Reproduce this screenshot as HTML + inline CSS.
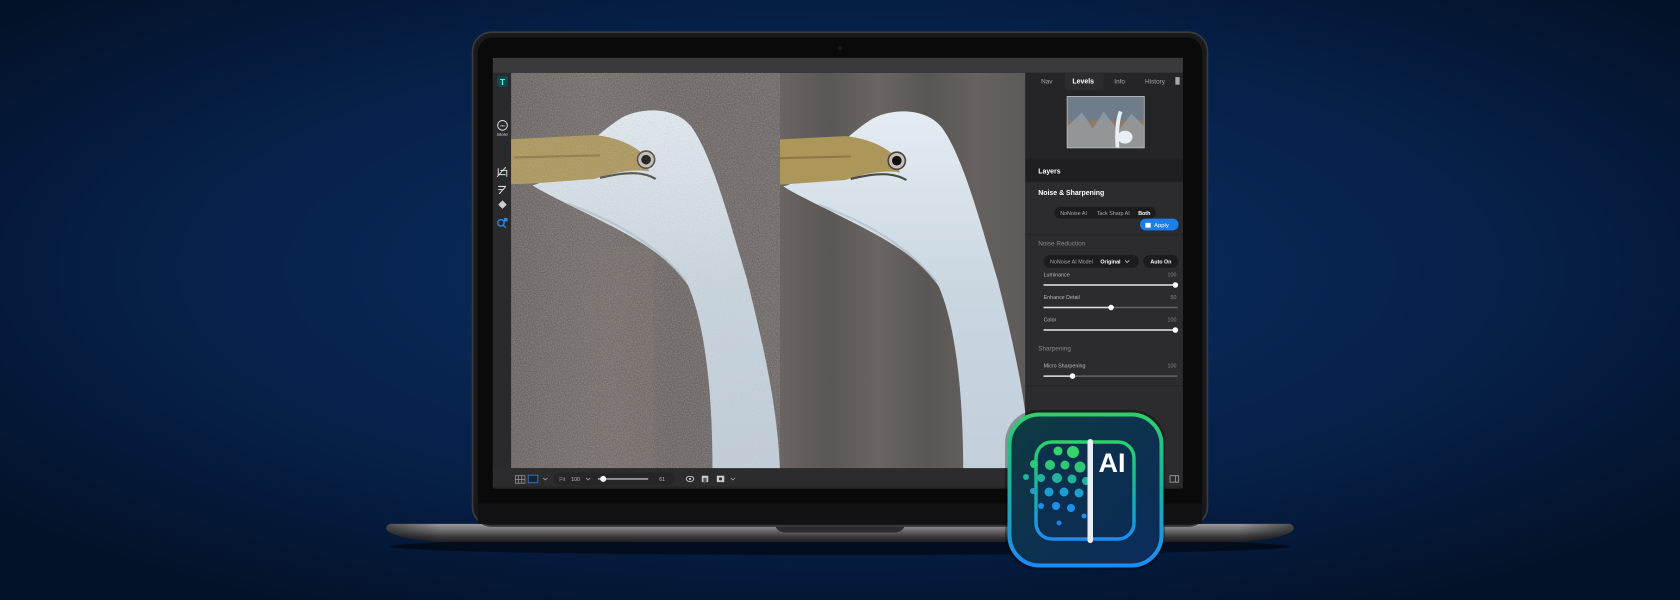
<!DOCTYPE html>
<html><head><meta charset="utf-8"><style>
html,body{margin:0;padding:0;width:1680px;height:600px;overflow:hidden;background:#04142d}
svg{display:block}
text{font-family:"Liberation Sans",sans-serif}
</style></head><body>
<svg width="1680" height="600" viewBox="0 0 1568 560" xmlns="http://www.w3.org/2000/svg">
<defs>
<radialGradient id="bg" cx="0.5" cy="0.45" r="0.65">
<stop offset="0" stop-color="#0b2f60"/><stop offset="0.6" stop-color="#06214a"/><stop offset="1" stop-color="#031228"/>
</radialGradient>
<linearGradient id="base" x1="0" y1="0" x2="0" y2="1">
<stop offset="0" stop-color="#9a9a9c"/><stop offset="0.35" stop-color="#6e6e70"/><stop offset="0.7" stop-color="#3a3a3c"/><stop offset="1" stop-color="#1c1c1e"/>
</linearGradient>
<linearGradient id="baseH" x1="0" y1="0" x2="1" y2="0">
<stop offset="0" stop-color="#000" stop-opacity="0.5"/><stop offset="0.06" stop-color="#000" stop-opacity="0"/><stop offset="0.94" stop-color="#000" stop-opacity="0"/><stop offset="1" stop-color="#000" stop-opacity="0.5"/>
</linearGradient>
<linearGradient id="leftbg" x1="0" y1="0" x2="1" y2="0">
<stop offset="0" stop-color="#6a6461"/><stop offset="0.3" stop-color="#736c69"/><stop offset="0.6" stop-color="#6b6562"/><stop offset="1" stop-color="#6e6865"/>
</linearGradient>
<linearGradient id="rightbg" x1="0" y1="0" x2="1" y2="0">
<stop offset="0" stop-color="#6a6462"/><stop offset="0.2" stop-color="#5b5755"/><stop offset="0.4" stop-color="#6a6562"/><stop offset="0.6" stop-color="#5a5654"/><stop offset="0.8" stop-color="#66615f"/><stop offset="1" stop-color="#5e5a58"/>
</linearGradient>
<linearGradient id="bird" x1="0" y1="0" x2="0" y2="1">
<stop offset="0" stop-color="#e4ecf2"/><stop offset="0.5" stop-color="#c9d6e0"/><stop offset="1" stop-color="#c2cfdb"/>
</linearGradient>
<filter id="noise" x="0" y="0" width="1" height="1">
<feTurbulence type="fractalNoise" baseFrequency="0.9" numOctaves="2" seed="3"/>
<feColorMatrix type="matrix" values="0 0 0 0 0.5  0 0 0 0 0.5  0 0 0 0 0.5  0 0 0 1.2 -0.35"/>
</filter>
<clipPath id="cl"><rect x="477" y="68" width="251" height="369"/></clipPath>
<clipPath id="cr"><rect x="728" y="68" width="229" height="369"/></clipPath>
<clipPath id="ct"><rect x="996" y="90" width="72" height="48"/></clipPath>
<linearGradient id="ring" x1="0" y1="0" x2="0" y2="1">
<stop offset="0" stop-color="#2bd06a"/><stop offset="0.5" stop-color="#1bb0a0"/><stop offset="1" stop-color="#1c8cf5"/>
</linearGradient>
<linearGradient id="ifill" x1="0" y1="0" x2="1" y2="1">
<stop offset="0" stop-color="#0f3a40"/><stop offset="1" stop-color="#0b2a5c"/>
</linearGradient>
<g id="egret">
<path d="M497,173 C520,168 548,130 580,110 C598,100 630,99 645,118 C665,145 682,210 697,260 C712,320 726,380 728,440 L665,440 C665,360 657,300 642,266 C622,236 585,218 545,198 C525,188 508,180 497,173 Z" fill="url(#bird)"/>
<path d="M530,190 C570,205 610,225 640,262" stroke="#aab8c4" stroke-width="2" fill="none" opacity="0.6"/>
<path d="M477,130 L555,126 C575,128 590,135 598,142 L606,160 C590,157 570,162 555,167 L500,171 L477,172 Z" fill="#ad9659"/>
<path d="M480,147 L560,145" stroke="#7a6538" stroke-width="2" opacity="0.6"/>
<path d="M560,166 C585,160 600,160 612,167" stroke="#4a4845" stroke-width="2" fill="none"/>
<circle cx="603" cy="149" r="8" fill="#c9c2b8" stroke="#4a4440" stroke-width="1.5"/>
<circle cx="603" cy="149" r="4.5" fill="#111"/>
</g>
</defs>
<rect width="1568" height="560" fill="url(#bg)"/>

<ellipse cx="784" cy="510" rx="420" ry="8" fill="#000" opacity="0.5"/>
<path d="M364,489 L1204,489 Q1210,492 1206,496 Q1190,505 1150,506 L418,506 Q378,505 362,496 Q358,492 364,489 Z" fill="url(#base)"/>
<path d="M364,489 L1204,489 Q1210,492 1206,496 Q1190,505 1150,506 L418,506 Q378,505 362,496 Q358,492 364,489 Z" fill="url(#baseH)"/>
<path d="M723,489 L845,489 Q843,497 835,497 L733,497 Q725,497 723,489 Z" fill="#2c2c2e"/>

<rect x="441" y="30" width="686" height="461" rx="18" fill="#1a1a1c" stroke="#3c3c3f" stroke-width="1.5"/>
<rect x="446" y="35" width="676" height="454" rx="14" fill="#0a0a0b"/>
<circle cx="784" cy="45" r="2" fill="#1e1e22"/>
<rect x="446" y="470" width="676" height="19" fill="#121214"/>

<rect x="460" y="54" width="644" height="402" rx="3" fill="#2a2a2c"/>
<rect x="460" y="54" width="644" height="14" fill="#3a3a3c"/>
<rect x="460" y="68" width="17" height="369" fill="#2a2a2c"/>
<rect x="464" y="71" width="10" height="10" rx="2" fill="#0f4a4e"/>
<text x="469" y="79.5" font-size="8" fill="#6ee" text-anchor="middle" font-weight="bold">T</text>
<circle cx="469" cy="117" r="4.5" fill="none" stroke="#ddd" stroke-width="0.9"/>
<text x="469" y="119" font-size="4" fill="#ddd" text-anchor="middle">•••</text>
<text x="469" y="127" font-size="4.5" fill="#ccc" text-anchor="middle">More</text>
<path d="M465,157 L465,163 L472,163 M467,159 L473,159 L473,165 M464,165 L472,156" stroke="#ddd" stroke-width="0.9" fill="none"/>
<path d="M465,174 L472,174 M465,177 L469,177 M466,181 L472,174" stroke="#ddd" stroke-width="1" fill="none"/>
<path d="M469,187 L473,191 L469,195 L465,191 Z" fill="#ccc"/>
<circle cx="467.5" cy="208" r="3" fill="none" stroke="#2a8cf0" stroke-width="1.2"/>
<path d="M469.5,210 L472,212.5" stroke="#2a8cf0" stroke-width="1.2"/>
<circle cx="472" cy="205" r="1.8" fill="#2a8cf0"/>

<g clip-path="url(#cl)">
<rect x="477" y="68" width="251" height="369" fill="url(#leftbg)"/>
<rect x="560" y="230" width="50" height="207" fill="#7a716c" opacity="0.35"/>
<use href="#egret"/>
<rect x="477" y="68" width="251" height="369" filter="url(#noise)" opacity="0.55"/>
</g>
<g clip-path="url(#cr)">
<rect x="728" y="68" width="229" height="369" fill="url(#rightbg)"/>
<use href="#egret" transform="translate(234,1)"/>
</g>

<rect x="957" y="68" width="147" height="369" fill="#2c2c2e"/>
<rect x="957" y="68" width="147" height="80" fill="#252527"/>
<rect x="994" y="68" width="36" height="16" fill="#2c2c2e"/>
<g font-size="6" fill="#aaa" text-anchor="middle">
<text x="977" y="78">Nav</text>
<text x="1011" y="78" fill="#fff" font-weight="bold" font-size="6.5">Levels</text>
<text x="1045" y="78">Info</text>
<text x="1078" y="78">History</text>
</g>
<rect x="1097" y="72" width="4" height="7" fill="#aaa"/>
<g clip-path="url(#ct)">
<rect x="996" y="90" width="72" height="48" fill="#6f7c8a"/>
<rect x="996" y="112" width="72" height="26" fill="#8a7a6c"/>
<path d="M996,118 L1010,105 L1020,120 L1030,104 L1044,122 L1056,106 L1068,118 L1068,138 L996,138 Z" fill="#9aa6b4" opacity="0.6"/>
<path d="M1043,138 C1042,125 1043,112 1046,104" stroke="#e8eef2" stroke-width="3.5" fill="none"/>
<ellipse cx="1050" cy="128" rx="7" ry="6" fill="#e8eef2"/>
</g>
<rect x="996" y="90" width="72" height="48" fill="none" stroke="#bbb" stroke-width="0.8"/>
<rect x="957" y="148" width="147" height="22" fill="#1f1f21"/>
<text x="969" y="162" font-size="6.5" fill="#fff" font-weight="bold">Layers</text>
<text x="969" y="182" font-size="6.5" fill="#fff" font-weight="bold">Noise &amp; Sharpening</text>
<rect x="984" y="193" width="95" height="11" rx="5.5" fill="#1c1c1e"/>
<g font-size="5" fill="#aaa" text-anchor="middle">
<text x="1002" y="200.5">NoNoise AI</text>
<text x="1039" y="200.5">Tack Sharp AI</text>
<text x="1068" y="200.5" fill="#fff" font-weight="bold">Both</text>
</g>
<rect x="1064" y="204" width="36" height="11" rx="5.5" fill="#1a7fe8"/>
<rect x="1069" y="208" width="5" height="4.5" fill="#fff"/>
<text x="1084" y="212" font-size="5.5" fill="#fff" text-anchor="middle">Apply</text>
<line x1="957" y1="219" x2="1104" y2="219" stroke="#262628"/>
<text x="969" y="229" font-size="6" fill="#8a8a8c">Noise Reduction</text>
<rect x="974" y="238" width="89" height="12" rx="6" fill="#1c1c1e"/>
<text x="980" y="246" font-size="5" fill="#aaa">NoNoise AI Model</text>
<text x="1027" y="246" font-size="5" fill="#fff" font-weight="bold">Original</text>
<path d="M1050,243 L1052,245 L1054,243" stroke="#ddd" stroke-width="0.7" fill="none"/>
<rect x="1067" y="238" width="33" height="12" rx="6" fill="#1c1c1e"/>
<text x="1083.5" y="246" font-size="5" fill="#fff" font-weight="bold" text-anchor="middle">Auto On</text>
<g font-size="5" fill="#bbb">
<text x="974" y="258">Luminance</text><text x="1098" y="258" text-anchor="end" fill="#888">100</text>
<text x="974" y="279">Enhance Detail</text><text x="1098" y="279" text-anchor="end" fill="#888">50</text>
<text x="974" y="300">Color</text><text x="1098" y="300" text-anchor="end" fill="#888">100</text>
<text x="974" y="343">Micro Sharpening</text><text x="1098" y="343" text-anchor="end" fill="#888">100</text>
</g>
<g stroke-width="1.4">
<line x1="974" y1="266" x2="1099" y2="266" stroke="#666"/><line x1="974" y1="266" x2="1097" y2="266" stroke="#ddd"/>
<line x1="974" y1="287" x2="1099" y2="287" stroke="#666"/><line x1="974" y1="287" x2="1037" y2="287" stroke="#ddd"/>
<line x1="974" y1="308" x2="1099" y2="308" stroke="#666"/><line x1="974" y1="308" x2="1097" y2="308" stroke="#ddd"/>
<line x1="974" y1="351" x2="1099" y2="351" stroke="#666"/><line x1="974" y1="351" x2="1001" y2="351" stroke="#ddd"/>
</g>
<g fill="#fff"><circle cx="1097" cy="266" r="2.6"/><circle cx="1037" cy="287" r="2.6"/><circle cx="1097" cy="308" r="2.6"/><circle cx="1001" cy="351" r="2.6"/></g>
<text x="969" y="327" font-size="6" fill="#8a8a8c">Sharpening</text>
<line x1="957" y1="360" x2="1104" y2="360" stroke="#262628"/>

<rect x="460" y="437" width="644" height="19" fill="#2c2c2e"/>
<rect x="460" y="454" width="644" height="2" fill="#252527"/>
<g stroke="#aaa" stroke-width="0.6" fill="none">
<rect x="481" y="444" width="9" height="7"/><line x1="484" y1="444" x2="484" y2="451"/><line x1="487" y1="444" x2="487" y2="451"/><line x1="481" y1="447.5" x2="490" y2="447.5"/>
</g>
<rect x="493" y="443.5" width="9" height="7" fill="#1d2530" stroke="#2a7fd8" stroke-width="0.8"/>
<path d="M507,446 L509,448 L511,446" stroke="#aaa" stroke-width="0.7" fill="none"/>
<rect x="516" y="441" width="114" height="12" rx="6" fill="#262628"/>
<text x="522" y="449" font-size="5" fill="#999">Fit</text>
<text x="533" y="449" font-size="5" fill="#bbb">100</text>
<path d="M547,446 L549,448 L551,446" stroke="#aaa" stroke-width="0.7" fill="none"/>
<line x1="558" y1="447" x2="605" y2="447" stroke="#bbb" stroke-width="1.2"/>
<circle cx="563" cy="447" r="2.8" fill="#fff"/>
<text x="618" y="449" font-size="5" fill="#bbb" text-anchor="middle">61</text>
<ellipse cx="644" cy="447" rx="3.5" ry="2.5" fill="none" stroke="#ddd" stroke-width="0.8"/><circle cx="644" cy="447" r="1" fill="#ddd"/>
<rect x="655" y="444" width="6" height="6" fill="#ccc"/><rect x="656.5" y="446" width="3" height="4" fill="#555"/>
<rect x="669" y="444" width="7" height="6" fill="#ccc"/><circle cx="672.5" cy="447" r="1.5" fill="#333"/>
<path d="M682,446 L684,448 L686,446" stroke="#aaa" stroke-width="0.7" fill="none"/>
<rect x="1092" y="444" width="8" height="6" fill="none" stroke="#aaa" stroke-width="0.7"/><line x1="1097" y1="444" x2="1097" y2="450" stroke="#aaa" stroke-width="0.7"/>

<g transform="scale(0.93333)">
<rect x="1005" y="410" width="160" height="160" rx="33" fill="#000" opacity="0.3"/>
<rect x="1009.5" y="414.5" width="152" height="151" rx="30" fill="url(#ifill)" stroke="url(#ring)" stroke-width="4"/>
<rect x="1036" y="442" width="98" height="97" rx="16" fill="#0c2b52" fill-opacity="0.5" stroke="url(#ring)" stroke-width="3.5"/>
<g>
<circle cx="1058" cy="451" r="4.5" fill="#33d46a"/><circle cx="1073" cy="452" r="6" fill="#33d46a"/>
<circle cx="1034" cy="464" r="4" fill="#2ec874"/><circle cx="1050" cy="465" r="5" fill="#2ec874"/><circle cx="1065" cy="465" r="4.5" fill="#2ec874"/><circle cx="1080" cy="467" r="5.5" fill="#2ec874"/>
<circle cx="1026" cy="477" r="3" fill="#22b49a"/><circle cx="1041" cy="478" r="4" fill="#22b49a"/><circle cx="1057" cy="478" r="5" fill="#22b49a"/><circle cx="1072" cy="479" r="4.5" fill="#22b49a"/><circle cx="1086" cy="481" r="4" fill="#22b49a"/>
<circle cx="1033" cy="491" r="3" fill="#1e9ed0"/><circle cx="1049" cy="492" r="4.5" fill="#1e9ed0"/><circle cx="1064" cy="492" r="4.5" fill="#1e9ed0"/><circle cx="1079" cy="493" r="4.5" fill="#1e9ed0"/>
<circle cx="1041" cy="506" r="3" fill="#1d90e8"/><circle cx="1056" cy="506" r="4" fill="#1d90e8"/><circle cx="1071" cy="508" r="4" fill="#1d90e8"/><circle cx="1084" cy="516" r="2.5" fill="#1d90e8"/>
<circle cx="1059" cy="523" r="2.5" fill="#1a86f0"/>
</g>
<rect x="1087.5" y="439" width="5.5" height="104" rx="2.7" fill="#e8eef4"/>
<text x="1112" y="472" font-size="27" font-weight="bold" fill="#fff" text-anchor="middle">AI</text>
</g>
</svg>
</body></html>
